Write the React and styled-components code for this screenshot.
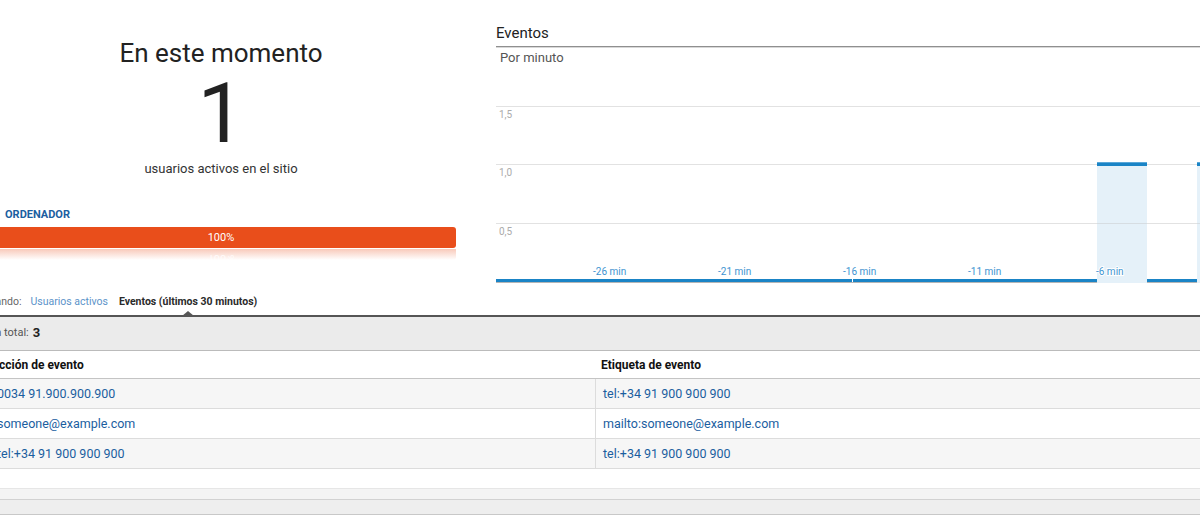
import React from "react";
import styled, { createGlobalStyle } from "styled-components";

const Global = createGlobalStyle`
  html, body { margin: 0; padding: 0; background: #fff; }
  body {
    width: 1200px;
    height: 517px;
    overflow: hidden;
    font-family: Roboto, "Liberation Sans", Arial, sans-serif;
    color: #222;
  }
  * { box-sizing: border-box; }
`;

const Page = styled.div`
  width: 1200px;
  height: 517px;
  overflow: hidden;
`;

const Top = styled.section`
  display: flex;
  gap: 40px;
  height: 290px;
  margin-left: -14px;
`;

const NowPanel = styled.div`
  flex: none;
  width: 470px;
  display: flex;
  flex-direction: column;
  align-items: center;
  padding-top: 40px;
`;

const NowTitle = styled.h2`
  margin: 0;
  font-size: 26px;
  line-height: 26px;
  font-weight: 400;
  color: #222;
`;

const BigNumber = styled.div`
  margin-top: 6px;
  font-size: 84px;
  line-height: 84px;
  font-weight: 400;
  color: #222;
`;

const NowCaption = styled.div`
  margin-top: 6px;
  font-size: 13px;
  line-height: 13px;
  color: #333;
`;

const DeviceLabel = styled.div`
  align-self: stretch;
  margin-top: 34px;
  padding-left: 19px;
  font-size: 11px;
  line-height: 11px;
  font-weight: 700;
  color: #1b5e9f;
  text-transform: uppercase;
`;

const ShareBar = styled.div`
  align-self: stretch;
  margin-top: 7px;
  height: 21px;
  background: ${(p) => p.$color};
  border-radius: 0 3px 3px 0;
  color: #fff;
  font-size: 11px;
  display: flex;
  align-items: center;
  justify-content: center;
`;

const BarReflection = styled.div`
  align-self: stretch;
  height: 11px;
  margin-top: 1px;
  overflow: hidden;
  border-radius: 0 0 3px 0;
  background: linear-gradient(rgba(233, 78, 27, 0.3), rgba(233, 78, 27, 0));
  display: flex;
  justify-content: center;
  color: rgba(255, 255, 255, 0.8);
  font-size: 11px;
  line-height: 11px;
  span {
    display: block;
    transform: scaleY(-1) translateY(-4px);
  }
`;

const ChartPanel = styled.div`
  flex: none;
  width: 760px;
  padding-top: 26px;
`;

const ChartTitle = styled.h3`
  margin: 0;
  font-size: 15px;
  line-height: 15px;
  font-weight: 400;
  color: #222;
  padding-bottom: 5px;
  border-bottom: 1px solid #8f8f8f;
  box-shadow: 0 1px 0 #d8d8d8;
`;

const ChartSub = styled.div`
  margin-top: 4px;
  padding-left: 4px;
  font-size: 13px;
  line-height: 13px;
  color: #555;
`;

const ChartSvg = styled.svg`
  display: block;
  margin-top: 6px;
  overflow: visible;
  font-family: Roboto, "Liberation Sans", Arial, sans-serif;
`;

const Bottom = styled.section`
  margin-left: -50px;
  width: 1260px;
`;

const Tabs = styled.div`
  display: flex;
  align-items: flex-start;
  height: 27px;
  padding-top: 5px;
  padding-left: 9px;
  border-bottom: 2px solid #555;
  font-size: 10.5px;
  line-height: 13px;
`;

const TabLead = styled.span`
  color: #666;
  margin-right: 9px;
`;

const Tab = styled.span`
  position: relative;
  margin-right: 11px;
  color: ${(p) => (p.$active ? "#2a2a2a" : "#5b93c9")};
  font-weight: ${(p) => (p.$active ? 700 : 400)};
  ${(p) =>
    p.$active &&
    `
    &::after {
      content: "";
      position: absolute;
      left: 50%;
      top: 16px;
      margin-left: -6px;
      border-left: 6px solid transparent;
      border-right: 6px solid transparent;
      border-bottom: 5px solid #555;
    }
  `}
`;

const Summary = styled.div`
  display: flex;
  align-items: center;
  height: 34px;
  margin-left: -2px;
  padding-bottom: 2px;
  background: #ebebeb;
  border-bottom: 1px solid #bbb;
  font-size: 11px;
  color: #555;
  b {
    margin-left: 4px;
    font-size: 13px;
    color: #222;
  }
`;

const Row = styled.div`
  display: grid;
  grid-template-columns: 645px 1fr;
  height: ${(p) => (p.$head ? "28px" : "30px")};
  background: ${(p) => (p.$shade ? "#f6f6f6" : "#fff")};
  border-bottom: 1px solid ${(p) => (p.$head ? "#c4c4c4" : "#dcdcdc")};
`;

const Cell = styled.div`
  display: flex;
  align-items: center;
  padding-left: ${(p) => p.$pad}px;
  font-size: ${(p) => (p.$head ? "12px" : "12.5px")};
  font-weight: ${(p) => (p.$head ? 700 : 400)};
  color: ${(p) => (p.$head ? "#111" : "#1b5e9f")};
  border-left: ${(p) => (p.$sep ? "1px solid #dcdcdc" : "none")};
  white-space: nowrap;
`;

const Spacer = styled.div`
  height: 19px;
`;

const Band = styled.div`
  height: ${(p) => p.$h}px;
  background: ${(p) => p.$bg};
  border-top: ${(p) => (p.$top ? "1px solid #e6e6e6" : "none")};
  border-bottom: 1px solid ${(p) => p.$line};
`;

const BLUE = "#1a84c6";

function EventsChart() {
  const grid = [
    { y: 36, label: "1,5" },
    { y: 94, label: "1,0" },
    { y: 153, label: "0,5" },
  ];
  const ticks = [
    { x: 97, t: "-26 min" },
    { x: 222, t: "-21 min" },
    { x: 347, t: "-16 min" },
    { x: 472, t: "-11 min" },
    { x: 600, t: "-6 min" },
  ];
  const bars = [601, 701];
  return (
    <ChartSvg width="760" height="220" viewBox="0 0 760 220">
      {grid.map((g) => (
        <g key={g.label}>
          <line x1="0" x2="760" y1={g.y + 0.5} y2={g.y + 0.5} stroke="#e2e2e2" strokeWidth="1" />
          <text x="3" y={g.y + 12} fontSize="10" fill="#ababab">
            {g.label}
          </text>
        </g>
      ))}
      <rect x="0" y="212" width="760" height="1" fill="#b5b5b5" />
      <rect x="0" y="209" width="760" height="3" fill={BLUE} />
      {bars.map((x) => (
        <g key={x}>
          <rect x={x} y="92" width="50" height="121" fill="#e5f1f9" />
          <rect x={x} y="92" width="50" height="1" fill="#5aa7d8" />
          <rect x={x} y="93" width="50" height="3" fill={BLUE} />
          <line x1={x} x2={x + 50} y1={153.5} y2={153.5} stroke="#d6dde2" strokeWidth="1" />
        </g>
      ))}
      <rect x="356" y="209" width="1" height="3" fill="#fff" />
      {ticks.map((k) => (
        <text
          key={k.t}
          x={k.x}
          y="205"
          fontSize="10"
          fill="#3d94d1"
          stroke="#fff"
          strokeWidth="2"
          paintOrder="stroke"
        >
          {k.t}
        </text>
      ))}
    </ChartSvg>
  );
}

const rows = [
  ["0034 91.900.900.900", "tel:+34 91 900 900 900"],
  ["someone@example.com", "mailto:someone@example.com"],
  ["tel:+34 91 900 900 900", "tel:+34 91 900 900 900"],
];

export default function App() {
  return (
    <Page>
      <Global />
      <Top>
        <NowPanel>
          <NowTitle>En este momento</NowTitle>
          <BigNumber>1</BigNumber>
          <NowCaption>usuarios activos en el sitio</NowCaption>
          <DeviceLabel>Ordenador</DeviceLabel>
          <ShareBar $color="#e94e1b">100%</ShareBar>
          <BarReflection>
            <span>100%</span>
          </BarReflection>
        </NowPanel>
        <ChartPanel>
          <ChartTitle>Eventos</ChartTitle>
          <ChartSub>Por minuto</ChartSub>
          <EventsChart />
        </ChartPanel>
      </Top>
      <Bottom>
        <Tabs>
          <TabLead>Visualizando:</TabLead>
          <Tab>Usuarios activos</Tab>
          <Tab $active>Eventos (últimos 30 minutos)</Tab>
        </Tabs>
        <Summary>
          Eventos en total:<b>3</b>
        </Summary>
        <Row $head>
          <Cell $head $pad={41}>Acción de evento</Cell>
          <Cell $head $pad={6}>Etiqueta de evento</Cell>
        </Row>
        {rows.map((r, i) => (
          <Row key={i} $shade={i % 2 === 0}>
            <Cell $pad={47}>{r[0]}</Cell>
            <Cell $pad={7} $sep>
              {r[1]}
            </Cell>
          </Row>
        ))}
        <Spacer />
        <Band $h={12} $bg="#f4f4f4" $line="#d2d2d2" $top />
        <Band $h={15} $bg="#eeeeee" $line="#c8c8c8" />
      </Bottom>
    </Page>
  );
}
